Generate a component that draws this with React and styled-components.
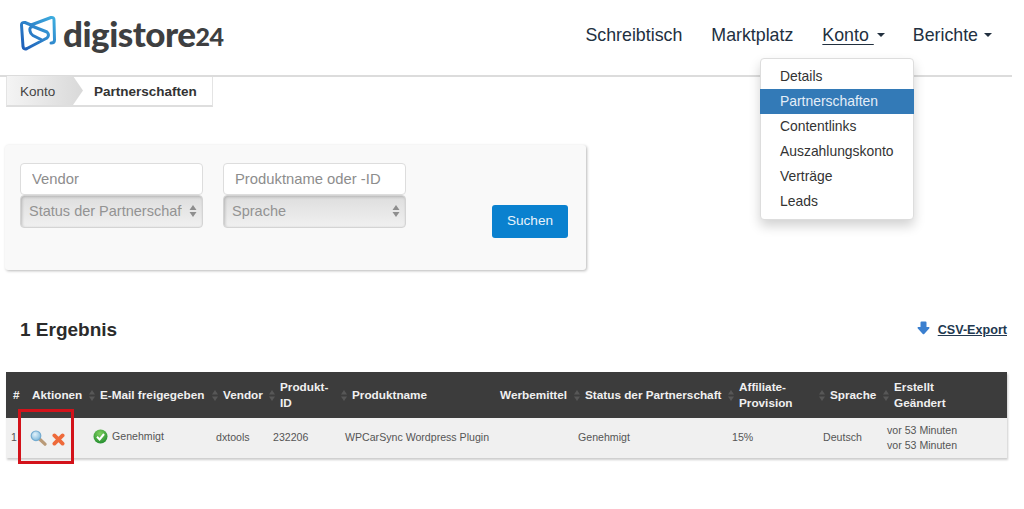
import React from 'react'
import styled, { createGlobalStyle } from 'styled-components'

const Global = createGlobalStyle`
  html, body {
    margin: 0;
    background: #fff;
    font-family: "Liberation Sans", Arial, sans-serif;
  }
`
const Page = styled.div`
  position: relative;
  width: 1024px;
  height: 509px;
  overflow: hidden;
`
const Header = styled.header`
  position: relative;
  box-sizing: border-box;
  width: 1012px;
  height: 77px;
  padding: 0 0 0 20px;
  display: flex;
  align-items: flex-start;
  justify-content: space-between;
  border-bottom: 2px solid #dcdcdc;
`
const Logo = styled.div`
  display: flex;
  align-items: center;
  height: 36px;
  margin-top: 15px;
  color: #3e3f41;
  font-family: Lato, sans-serif;
  font-weight: 900;
  font-size: 35px;
  letter-spacing: -0.5px;
`
const LogoMark = styled.svg`
  width: 37px;
  height: 37px;
  margin-right: 6px;
`
const LogoNum = styled.span`
  font-size: 25px;
  letter-spacing: -0.6px;
  margin-top: 6px;
`
const Nav = styled.nav`
  display: flex;
  margin-top: 25px;
  margin-right: 20px;
  font-size: 17.8px;
  line-height: 20px;
  color: #22303f;
`
const NavItem = styled.span`
  display: inline-flex;
  align-items: center;
  white-space: pre;
  margin-left: ${p => p.$gap}px;
`
const NavLabel = styled.span`
  text-decoration: ${p => (p.$active ? 'underline' : 'none')};
  text-underline-offset: 3px;
`
const Caret = styled.i`
  width: 0;
  height: 0;
  margin-left: ${p => p.$gap ?? 5}px;
  border-left: 4px solid transparent;
  border-right: 4px solid transparent;
  border-top: 4px solid #22303f;
`
const Dropdown = styled.ul`
  position: absolute;
  left: 760px;
  top: 58px;
  box-sizing: border-box;
  width: 154px;
  height: 162px;
  margin: 0;
  padding: 5px 0;
  list-style: none;
  background: #fff;
  border-radius: 4px;
  border: 1px solid #ddd;
  box-shadow: 0 6px 12px rgba(0, 0, 0, 0.18);
  z-index: 2;
`
const DropItem = styled.li`
  height: 25px;
  line-height: 25px;
  margin: 0 -1px;
  padding-left: 20px;
  font-size: 13.9px;
  color: ${p => (p.$active ? '#e4eef7' : '#333')};
  background: ${p => (p.$active ? '#337ab7' : 'transparent')};
`
const Crumbs = styled.div`
  display: flex;
  box-sizing: border-box;
  width: 207px;
  height: 31px;
  margin: -1px 0 0 6px;
  background: #fff;
  border: 1px solid #e4e4e4;
  border-top: 0;
  border-bottom: 2px solid #dedede;
  font-size: 13.5px;
  line-height: 31px;
  color: #333;
`
const CrumbBack = styled.span`
  width: 76px;
  padding-left: 13px;
  box-sizing: border-box;
  color: #444;
  background: linear-gradient(90deg, #f4f4f4, #d9d9d9);
  clip-path: polygon(0 0, calc(100% - 10px) 0, 100% 50%, calc(100% - 10px) 100%, 0 100%);
`
const CrumbCurrent = styled.b`
  margin-left: 11px;
`
const Panel = styled.section`
  box-sizing: border-box;
  display: flex;
  width: 581px;
  height: 125px;
  margin: 38px 0 0 5px;
  padding: 18px 15px;
  background: #f9f9f9;
  border-radius: 3px;
  box-shadow: 1px 1px 3px rgba(0, 0, 0, 0.28);
`
const FieldGroup = styled.div`
  display: flex;
  flex-direction: column;
  width: 183px;
  margin-right: 20px;
`
const TextInput = styled.input`
  box-sizing: border-box;
  width: 100%;
  height: 32px;
  padding: 0 11px;
  background: #fff;
  border: 1px solid #ddd;
  border-radius: 4px;
  outline: 0;
  font: 14.8px "Liberation Sans", Arial, sans-serif;
  &::placeholder {
    color: #8d8d8d;
    opacity: 1;
  }
`
const SelectBox = styled.div`
  box-sizing: border-box;
  display: flex;
  align-items: center;
  justify-content: space-between;
  height: 33px;
  padding: 0 5px 1px 8px;
  border: 1px solid #d4d4d4;
  border-radius: 4px;
  background: linear-gradient(180deg, #dedede, #f0f0f0);
  box-shadow: inset 1px 1px 3px rgba(0, 0, 0, 0.2);
  font-size: 14.5px;
  color: #939393;
`
const SelectText = styled.span`
  width: 153px;
  overflow: hidden;
  white-space: nowrap;
`
const SearchButton = styled.button`
  width: 76px;
  height: 33px;
  margin: 42px 0 0 66px;
  padding: 0 0 2px;
  border: 0;
  border-radius: 3px;
  background: #0a81cf;
  color: #e8f3fb;
  font: 13.6px "Liberation Sans", Arial, sans-serif;
`
const ResultBar = styled.div`
  display: flex;
  align-items: center;
  justify-content: space-between;
  width: 987px;
  height: 24px;
  margin: 48px 0 30px 20px;
`
const ResultTitle = styled.h2`
  margin: 0;
  font-size: 19px;
  font-weight: 700;
  color: #2b2b2b;
`
const ExportLink = styled.a`
  display: flex;
  align-items: center;
  gap: 8px;
  font-size: 12.6px;
  font-weight: 700;
  color: #22384f;
  span {
    text-decoration: underline;
  }
`
const ExportSvg = styled.svg`
  margin-top: -4px;
`
const Table = styled.table`
  width: 1001px;
  margin-left: 6px;
  border-collapse: collapse;
  table-layout: fixed;
  box-shadow: 1px 2px 2px rgba(0, 0, 0, 0.2);
`
const HeadRow = styled.tr`
  height: 46px;
  background: #3c3c3c;
`
const HeadCell = styled.th`
  padding: 0 0 0 ${p => p.$pad ?? 7}px;
  text-align: left;
  font-size: 11.75px;
  line-height: 16px;
  font-weight: 700;
  color: #f0f0f0;
`
const HeadInner = styled.div`
  display: flex;
  align-items: center;
  gap: 5px;
`
const BodyRow = styled.tr`
  height: 40px;
  background: #f0f0f0;
`
const BodyCell = styled.td`
  padding: 0 0 1px ${p => p.$pad ?? 5}px;
  font-size: 10.6px;
  line-height: 15px;
  color: #555;
  white-space: nowrap;
`
const ActionIcons = styled.div`
  display: flex;
  align-items: center;
  gap: 5px;
  svg:last-child {
    margin-top: 3px;
  }
`
const StatusCell = styled.div`
  display: flex;
  align-items: center;
  gap: 4px;
  margin-top: -3px;
`
const Annotation = styled.div`
  position: absolute;
  left: 18px;
  top: 409px;
  width: 56px;
  height: 55px;
  box-sizing: border-box;
  border: 3px solid #d3121a;
  z-index: 1;
`

const SortIcon = () => (
  <svg width="6" height="11" viewBox="0 0 6 11">
    <path d="M3 0 L6 4.5 H0 Z M3 11 L0 6.5 H6 Z" fill="#575757" />
  </svg>
)

const SelectArrows = () => (
  <svg width="8" height="14" viewBox="0 0 8 14">
    <path d="M4 1 L7.5 6 H.5 Z M4 13 L.5 8 H7.5 Z" fill="#8e8e8e" />
  </svg>
)

const LogoIcon = () => (
  <LogoMark viewBox="20 14 37 37" fill="none" strokeWidth="3" strokeLinecap="round" strokeLinejoin="round">
    <defs>
      <linearGradient id="lg" x1="20" y1="50" x2="55" y2="15" gradientUnits="userSpaceOnUse">
        <stop offset="0" stopColor="#1c57b5" />
        <stop offset="1" stopColor="#3fb0e0" />
      </linearGradient>
    </defs>
    <path
      d="M31 24 L51 16.5 Q54 16 54 19 L54.5 39 Q54.5 42 51 42 M31 24 L25 21.5 Q21.5 21 21.5 24 L23 45.5 Q23.5 49 27 47.5 L47 37 Q50 34 47 31 L33 25.5 Q29 26 30 30 Q30.5 33 33 34.5 L42 39"
      stroke="url(#lg)"
    />
  </LogoMark>
)

const MagnifierIcon = () => (
  <svg width="17" height="16" viewBox="0 0 17 16">
    <defs>
      <radialGradient id="lens" cx="0.4" cy="0.35" r="0.7">
        <stop offset="0" stopColor="#e2f2fb" />
        <stop offset="1" stopColor="#7ab6da" />
      </radialGradient>
    </defs>
    <path d="M9.5 9 L15 14.2" stroke="#b99a78" strokeWidth="3.2" strokeLinecap="round" />
    <circle cx="6" cy="5.8" r="4.8" fill="url(#lens)" stroke="#74abd0" strokeWidth="1.2" />
  </svg>
)

const CrossIcon = () => (
  <svg width="13" height="13" viewBox="0 0 13 13">
    <path d="M2.4 2.4 L10.6 10.6 M10.6 2.4 L2.4 10.6" stroke="#ee6a3a" strokeWidth="3.8" strokeLinecap="round" />
  </svg>
)

const CheckIcon = () => (
  <svg width="15" height="15" viewBox="0 0 15 15">
    <defs>
      <radialGradient id="ok" cx="0.45" cy="0.3" r="0.75">
        <stop offset="0" stopColor="#7fd05e" />
        <stop offset="1" stopColor="#1f8a2e" />
      </radialGradient>
    </defs>
    <circle cx="7.5" cy="7.5" r="7" fill="url(#ok)" />
    <path d="M4 7.8 L6.6 10.4 L11 5" fill="none" stroke="#fff" strokeWidth="2" />
  </svg>
)

const ExportArrow = () => (
  <ExportSvg width="13" height="14" viewBox="0 0 13 14">
    <path d="M3.5 1.5 Q3.5 .5 4.5 .5 H8.5 Q9.5 .5 9.5 1.5 V6 H12 Q13 6.5 12.2 7.5 L7.2 13 Q6.5 13.6 5.8 13 L.8 7.5 Q0 6.5 1 6 H3.5 Z" fill="#3a7fcf" />
  </ExportSvg>
)

const columns = [
  { w: 19, label: '#', sort: false, pad: 7 },
  { w: 63, label: 'Aktionen', sort: false, pad: 7 },
  { w: 123, label: 'E-Mail freigegeben', sort: true, pad: 1 },
  { w: 57, label: 'Vendor', sort: true, pad: 1 },
  { w: 72, label: ['Produkt-', 'ID'], sort: true, pad: 1 },
  { w: 155, label: 'Produktname', sort: true, pad: 1 },
  { w: 78, label: 'Werbemittel', sort: false, pad: 5 },
  { w: 154, label: 'Status der Partnerschaft', sort: true, pad: 1 },
  { w: 91, label: ['Affiliate-', 'Provision'], sort: true, pad: 1 },
  { w: 64, label: 'Sprache', sort: true, pad: 1 },
  { w: 125, label: ['Erstellt', 'Geändert'], sort: true, pad: 1 },
]

const menu = ['Details', 'Partnerschaften', 'Contentlinks', 'Auszahlungskonto', 'Verträge', 'Leads']

const App = () => (
  <Page>
    <Global />
    <Header>
      <Logo>
        <LogoIcon />
        digistore<LogoNum>24</LogoNum>
      </Logo>
      <Nav>
        <NavItem>Schreibtisch</NavItem>
        <NavItem $gap={29}>Marktplatz</NavItem>
        <NavItem $gap={29}>
          <NavLabel $active>Konto </NavLabel>
          <Caret $gap={3} />
        </NavItem>
        <NavItem $gap={28}>
          Berichte
          <Caret $gap={6} />
        </NavItem>
      </Nav>
    </Header>
    <Dropdown>
      {menu.map(item => (
        <DropItem key={item} $active={item === 'Partnerschaften'}>
          {item}
        </DropItem>
      ))}
    </Dropdown>
    <Crumbs>
      <CrumbBack>Konto</CrumbBack>
      <CrumbCurrent>Partnerschaften</CrumbCurrent>
    </Crumbs>
    <Panel>
      <FieldGroup>
        <TextInput placeholder="Vendor" />
        <SelectBox>
          <SelectText>Status der Partnerschaft</SelectText>
          <SelectArrows />
        </SelectBox>
      </FieldGroup>
      <FieldGroup>
        <TextInput placeholder="Produktname oder -ID" />
        <SelectBox>
          <SelectText>Sprache</SelectText>
          <SelectArrows />
        </SelectBox>
      </FieldGroup>
      <SearchButton>Suchen</SearchButton>
    </Panel>
    <ResultBar>
      <ResultTitle>1 Ergebnis</ResultTitle>
      <ExportLink>
        <ExportArrow />
        <span>CSV-Export</span>
      </ExportLink>
    </ResultBar>
    <Table>
      <colgroup>
        {columns.map((c, i) => (
          <col key={i} style={{ width: c.w }} />
        ))}
      </colgroup>
      <thead>
        <HeadRow>
          {columns.map((c, i) => (
            <HeadCell key={i} $pad={c.pad}>
              <HeadInner>
                {c.sort && <SortIcon />}
                <span>
                  {Array.isArray(c.label) ? (
                    <>
                      {c.label[0]}
                      <br />
                      {c.label[1]}
                    </>
                  ) : (
                    c.label
                  )}
                </span>
              </HeadInner>
            </HeadCell>
          ))}
        </HeadRow>
      </thead>
      <tbody>
        <BodyRow>
          <BodyCell>1</BodyCell>
          <BodyCell>
            <ActionIcons>
              <MagnifierIcon />
              <CrossIcon />
            </ActionIcons>
          </BodyCell>
          <BodyCell>
            <StatusCell>
              <CheckIcon />
              Genehmigt
            </StatusCell>
          </BodyCell>
          <BodyCell>dxtools</BodyCell>
          <BodyCell>232206</BodyCell>
          <BodyCell>WPCarSync Wordpress Plugin</BodyCell>
          <BodyCell />
          <BodyCell>Genehmigt</BodyCell>
          <BodyCell>15%</BodyCell>
          <BodyCell>Deutsch</BodyCell>
          <BodyCell>
            vor 53 Minuten
            <br />
            vor 53 Minuten
          </BodyCell>
        </BodyRow>
      </tbody>
    </Table>
    <Annotation />
  </Page>
)

export default App
